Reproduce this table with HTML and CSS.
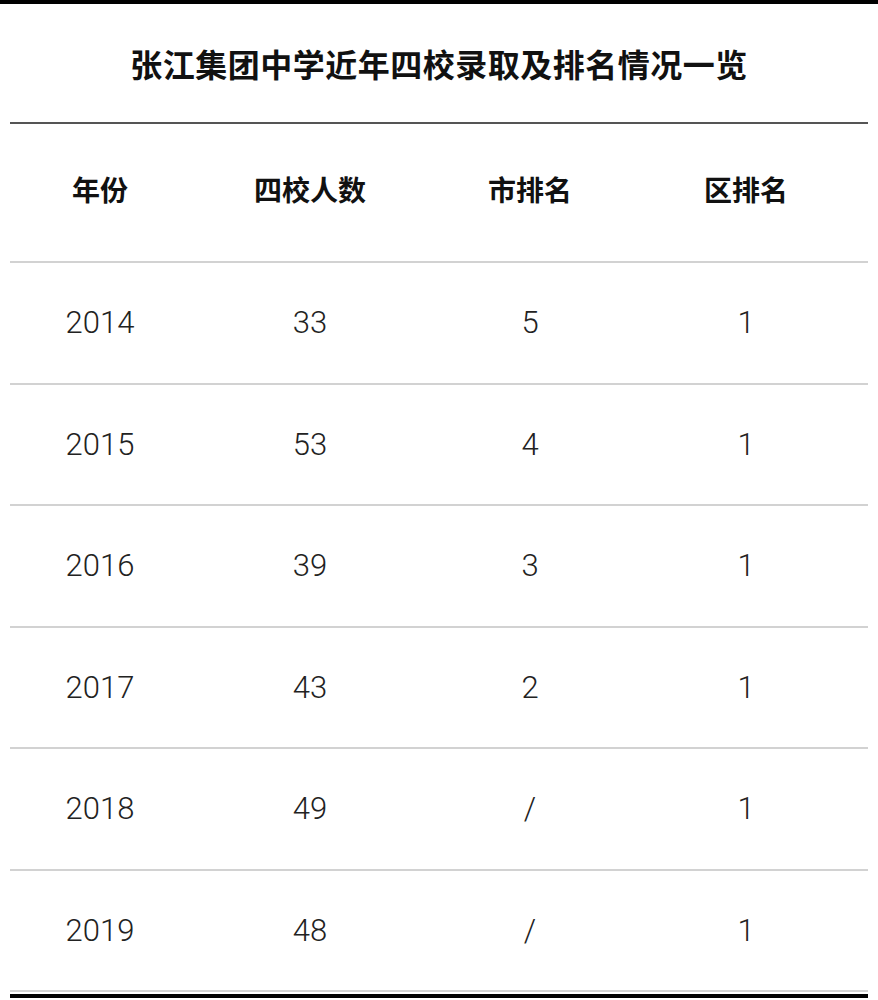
FILE: index.html
```html
<!DOCTYPE html>
<html lang="zh">
<head>
<meta charset="utf-8">
<title>张江集团中学近年四校录取及排名情况一览</title>
<link rel="stylesheet" href="styles.css">
</head>
<body>
<div class="topbar"></div>
<h1 class="title">张江集团中学近年四校录取及排名情况一览</h1>
<div class="table">
  <div class="row head">
    <div class="cell">年份</div>
    <div class="cell">四校人数</div>
    <div class="cell">市排名</div>
    <div class="cell">区排名</div>
  </div>
  <div class="row"><div class="cell">2014</div><div class="cell">33</div><div class="cell">5</div><div class="cell">1</div></div>
  <div class="row"><div class="cell">2015</div><div class="cell">53</div><div class="cell">4</div><div class="cell">1</div></div>
  <div class="row"><div class="cell">2016</div><div class="cell">39</div><div class="cell">3</div><div class="cell">1</div></div>
  <div class="row"><div class="cell">2017</div><div class="cell">43</div><div class="cell">2</div><div class="cell">1</div></div>
  <div class="row"><div class="cell">2018</div><div class="cell">49</div><div class="cell">/</div><div class="cell">1</div></div>
  <div class="row"><div class="cell">2019</div><div class="cell">48</div><div class="cell">/</div><div class="cell">1</div></div>
  <div class="bottom"></div>
</div>
</body>
</html>
```
FILE: styles.css
```css
html, body {
  margin: 0;
  padding: 0;
  background: #fff;
}
body {
  width: 878px;
  height: 1000px;
  overflow: hidden;
  font-family: "Roboto", "Liberation Sans", "Noto Sans CJK SC", sans-serif;
}
.topbar {
  height: 4px;
  background: #000;
}
.title {
  margin: 0;
  height: 118px;
  display: flex;
  align-items: center;
  justify-content: center;
  font-family: "Noto Sans CJK SC", sans-serif;
  font-size: 32px;
  font-weight: 700;
  color: #111;
  letter-spacing: 0.5px;
}
.table {
  margin: 0 10px;
  border-top: 2px solid #555;
}
.row {
  display: grid;
  grid-template-columns: 180px 240px 200px 232px;
  align-items: center;
  height: 121.5px;
  box-sizing: border-box;
  border-bottom: 2px solid #d2d2d2;
}
.row.head {
  height: 139px;
  padding-bottom: 8px;
}
.cell {
  text-align: center;
  font-size: 31px;
  font-weight: 300;
  color: #222;
}
.head .cell {
  font-family: "Noto Sans CJK SC", sans-serif;
  font-size: 28px;
  font-weight: 700;
  color: #111;
}
.bottom {
  margin-top: 2px;
  height: 4px;
  background: #000;
}
```
